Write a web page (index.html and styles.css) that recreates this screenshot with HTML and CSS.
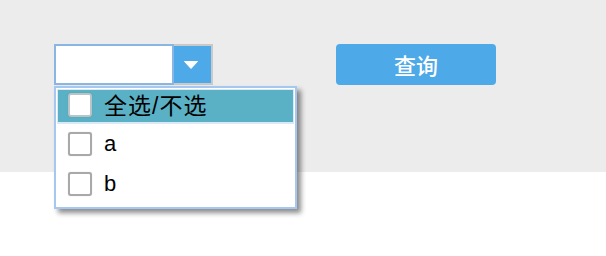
FILE: index.html
```html
<!DOCTYPE html>
<html lang="zh">
<head>
<meta charset="utf-8">
<title>查询</title>
<link rel="stylesheet" href="styles.css">
</head>
<body>
<div class="top">
  <div class="bar">
    <div class="combo">
      <div class="field"></div>
      <div class="toggle">
        <svg width="14" height="8" viewBox="0 0 14 8"><path d="M0.5 0.5 H13.5 L7 7.5 Z" fill="#fff" stroke="#fff" stroke-linejoin="round"/></svg>
      </div>
      <div class="dropdown">
        <div class="item active"><span class="box"></span><span class="label">全选/不选</span></div>
        <div class="item"><span class="box"></span><span class="label">a</span></div>
        <div class="item"><span class="box"></span><span class="label">b</span></div>
      </div>
    </div>
    <button class="query">查询</button>
  </div>
</div>
<div class="bottom"></div>
</body>
</html>
```
FILE: styles.css
```css
html, body {
  margin: 0;
  padding: 0;
  background: #ffffff;
  font-family: "Liberation Sans", "Noto Sans CJK SC", sans-serif;
}
body {
  min-height: 256px;
}
.top {
  background: #ececec;
  height: 172px;
  padding: 44px 0 0 54px;
  box-sizing: border-box;
}
.bottom {
  height: 84px;
  background: #ffffff;
}
.bar {
  display: flex;
  align-items: flex-start;
}
.combo {
  position: relative;
  z-index: 5;
  display: flex;
  width: 159px;
  height: 41px;
}
.field {
  width: 120px;
  height: 41px;
  box-sizing: border-box;
  border: 2px solid #8ab6e4;
  background: #ffffff;
}
.toggle {
  width: 39px;
  height: 41px;
  box-sizing: border-box;
  background: #4ea9e9;
  border: 2px solid #c9c9c9;
  border-left: none;
  display: flex;
  align-items: center;
  justify-content: center;
  padding-right: 4px;
  padding-top: 1px;
}
.dropdown {
  position: absolute;
  left: 0;
  top: 42px;
  width: 243px;
  height: 123px;
  box-sizing: border-box;
  border: 2px solid #a6c8f0;
  padding: 1px;
  background: #ffffff;
  box-shadow: 4px 4px 5px rgba(0, 0, 0, 0.45);
}
.item {
  display: flex;
  align-items: center;
  height: 40px;
  padding-left: 11px;
  box-sizing: border-box;
  font-size: 22px;
  color: #000000;
}
.item.active {
  height: 35px;
  background: #5ab1c5;
  border: 1px solid #dbe8f5;
  border-bottom-width: 2px;
  padding-left: 10px;
  font-size: 23px;
}
.box {
  width: 24px;
  height: 24px;
  box-sizing: border-box;
  border: 2px solid #a9a9a9;
  border-radius: 3px;
  background: #ffffff;
  box-shadow: 0 0 1px rgba(0, 0, 0, 0.25);
  margin-right: 12px;
  flex: none;
}
.item.active .box {
  margin-top: -2px;
  border-color: #b9c4c8;
}
.label {
  line-height: 24px;
}
.item.active .label {
  letter-spacing: 1px;
}
.query {
  margin-left: 123px;
  width: 160px;
  height: 41px;
  border: none;
  border-radius: 4px;
  background: #4ea9e8;
  color: #ffffff;
  font-family: "Noto Sans CJK SC", sans-serif;
  font-size: 22px;
  font-weight: 500;
  padding: 0;
  line-height: 41px;
}
```
